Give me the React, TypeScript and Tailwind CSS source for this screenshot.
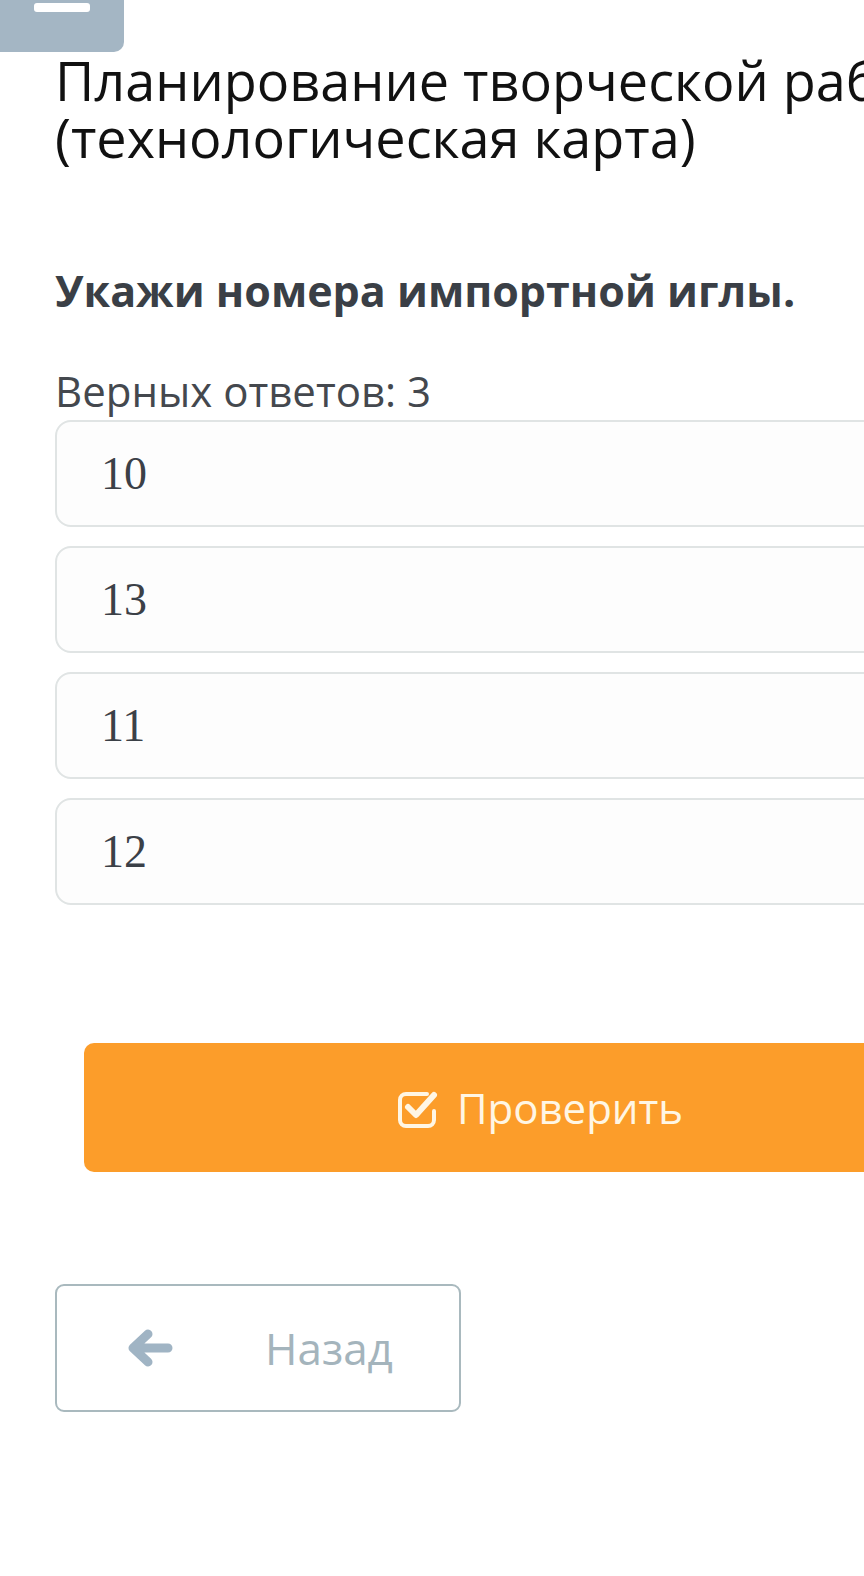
import React from "react";

const sans = { fontFamily: '"Open Sans", "Noto Sans", sans-serif' };

function CheckIcon() {
  return (
    <svg width="42" height="40" viewBox="0 0 42 40" fill="none">
      <path
        d="M30 6 H9 a6 6 0 0 0 -6 6 v20 a6 6 0 0 0 6 6 h22 a6 6 0 0 0 6 -6 v-9"
        stroke="#fff6e4"
        strokeWidth="4"
        strokeLinecap="round"
        strokeLinejoin="round"
      />
      <path
        d="M11 19 L19 27 L37 7"
        stroke="#fff6e4"
        strokeWidth="6"
        strokeLinecap="round"
        strokeLinejoin="round"
      />
    </svg>
  );
}

function ArrowLeft() {
  return (
    <svg width="46" height="40" viewBox="0 0 46 40" fill="none">
      <path
        d="M41 20 H7 M21 6 L6 20 L21 34"
        stroke="#a0b4c4"
        strokeWidth="9"
        strokeLinecap="round"
        strokeLinejoin="round"
      />
    </svg>
  );
}

export default function App() {
  const options = ["10", "13", "11", "12"];
  return (
    <div className="relative w-[864px] h-[1576px] overflow-hidden bg-white" style={sans}>
      <div className="w-[124px] h-[52px] bg-[#a4b6c4] rounded-br-[10px] pl-[34px] pt-[3px]">
        <div className="w-[56px] h-[9px] bg-white rounded-[3px]" />
      </div>
      <div className="ml-[55px] w-[970px]">
        <h1 className="text-[54px] leading-[57px] text-[#111111] font-normal whitespace-nowrap">
          Планирование творческой работы
          <br />
          (технологическая карта)
        </h1>
        <h2 className="mt-[100px] text-[43px] leading-[50px] font-bold text-[#3a3f46]">
          Укажи номера импортной иглы.
        </h2>
        <div className="mt-[50px] text-[42px] leading-[50px] text-[#44484e]">Верных ответов: 3</div>
        <div className="flex flex-col gap-[19px] mt-[4px]">
          {options.map((o) => (
            <div
              key={o}
              className="h-[107px] border-2 border-[#e0e4e4] rounded-[16px] bg-[#fdfdfd] flex items-center pl-[44px]"
            >
              <span
                className="text-[46px] text-[#3b4047] leading-none"
                style={{ fontFamily: '"Liberation Serif", "DejaVu Serif", serif' }}
              >
                {o}
              </span>
            </div>
          ))}
        </div>
        <div className="mt-[138px] mx-[29px] h-[129px] bg-[#fc9d2a] rounded-[10px] flex items-center justify-center gap-[18px]">
          <CheckIcon />
          <span className="text-[42px] text-[#fff6e4]">Проверить</span>
        </div>
        <div className="mt-[112px] w-[406px] h-[128px] border-2 border-[#a9b9be] rounded-[9px] flex items-center pl-[70px]">
          <ArrowLeft />
          <span className="ml-[92px] text-[44px] text-[#a4b4bc]">Назад</span>
        </div>
      </div>
    </div>
  );
}
